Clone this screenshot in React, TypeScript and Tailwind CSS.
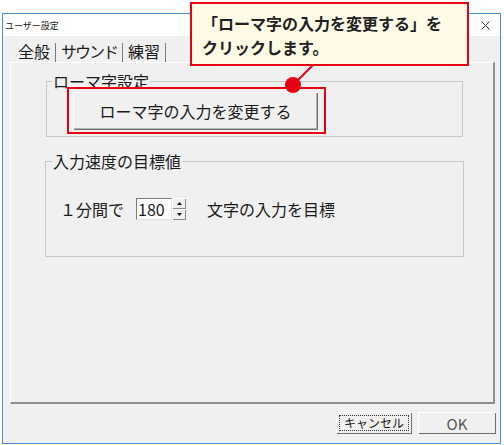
const red = "#e60012";

function Sep() {
  return <span className="mx-[5px] h-[19px] w-px self-end bg-[#7a7a7a]" />;
}

function SpinButton({ up }: { up?: boolean }) {
  return (
    <div className="flex h-[11px] w-[14px] items-center justify-center bg-[#f0f0f0] shadow-[inset_1px_1px_0_#fff,inset_-1px_-1px_0_#8a8a8a]">
      <svg width="5" height="3" viewBox="0 0 5 3">
        {up ? <path d="M2.5 0 L5 3 L0 3 Z" fill="#111" /> : <path d="M0 0 L5 0 L2.5 3 Z" fill="#111" />}
      </svg>
    </div>
  );
}

export default function App() {
  return (
    <div className="relative h-[445px] w-[504px] overflow-hidden bg-white font-['Noto_Sans_CJK_JP',sans-serif] text-[#1a1a1a]">
      <div className="pl-[2px] pt-[13px]">
        <div className="flex h-[431px] w-[499px] flex-col border border-[#4a8fd0] bg-[#f0f0f0]">
          {/* title bar */}
          <div className="flex h-[22px] items-center justify-between bg-white pl-[2px] pr-[10px]">
            <span className="text-[9px] leading-none">ユーザー設定</span>
            <svg width="9" height="9" viewBox="0 0 9 9">
              <path d="M0.5 0.5 L8.5 8.5 M8.5 0.5 L0.5 8.5" stroke="#333" strokeWidth="1" />
            </svg>
          </div>

          {/* tabs */}
          <div className="flex h-[26px] items-end pl-[15px] text-[16px] leading-[20px]">
            <span className="pb-[1px]">全般</span>
            <Sep />
            <span className="pb-[1px] tracking-[-2px]">サウンド</span>
            <Sep />
            <span className="pb-[1px]">練習</span>
            <Sep />
          </div>

          {/* tab page */}
          <div className="ml-[7px] h-[342px] w-[485px] border-t border-l border-t-white border-l-white border-r-2 border-b-2 border-r-[#8e8e8e] border-b-[#8e8e8e]">
            <fieldset className="ml-[35px] mt-[9px] w-[417px] border border-[#c8c8c8] pb-[2px]">
              <legend className="ml-[5px] px-[1px] text-[16px] leading-[18px]">ローマ字設定</legend>
              <div className="relative z-10 ml-[20px] -mt-[3px] h-[47px] w-[259px] border-2 border-[#e60012] bg-[#f0f0f0] pl-[4px] pt-[3px]">
                <button className="flex h-[38px] w-[245px] items-center justify-center bg-[#f0f0f0] text-[16px] shadow-[inset_1px_1px_0_#fff,inset_-1px_-1px_0_#6e6e6e,inset_-2px_-2px_0_#b4b4b4]">
                  ローマ字の入力を変更する
                </button>
              </div>
            </fieldset>

            <fieldset className="ml-[34px] mt-[15px] w-[419px] border border-[#c8c8c8] pb-[36px]">
              <legend className="ml-[6px] px-[1px] text-[16px] leading-[18px]">入力速度の目標値</legend>
              <div className="ml-[14px] mt-[28px] flex h-[22px] items-center text-[16px]">
                <span>１分間で</span>
                <div className="ml-[12px] flex h-[22px] w-[36px] items-center border-t border-l border-t-[#7a7a7a] border-l-[#7a7a7a] border-r border-b border-r-[#e3e3e3] border-b-[#e3e3e3] bg-white pl-[1px] leading-none">
                  180
                </div>
                <div className="flex flex-col">
                  <SpinButton up />
                  <SpinButton />
                </div>
                <span className="ml-[21px]">文字の入力を目標</span>
              </div>
            </fieldset>
          </div>

          {/* footer buttons */}
          <div className="mt-[8px] flex justify-end gap-[6px] pr-[4px]">
            <button className="flex h-[22px] w-[76px] items-center justify-center bg-[#f0f0f0] p-[3px] shadow-[inset_1px_1px_0_#fff,inset_-1px_-1px_0_#6e6e6e]">
              <span className="flex h-full w-full items-center justify-center border border-dotted border-[#333] text-[12px] leading-none">
                キャンセル
              </span>
            </button>
            <button className="flex h-[22px] w-[78px] items-center justify-center bg-[#f0f0f0] text-[15px] leading-none text-[#555] shadow-[inset_1px_1px_0_#fff,inset_-1px_-1px_0_#6e6e6e]">
              OK
            </button>
          </div>
        </div>
      </div>

      {/* callout */}
      <div className="absolute left-[190px] top-[2px] h-[64px] w-[279px] border-2 border-[#e60012] bg-[#fffbe6] pl-[10px] pt-[7px] text-[16px] font-bold leading-[24px] text-[#222]">
        <p>「ローマ字の入力を変更する」を</p>
        <p>クリックします。</p>
      </div>
      <svg className="absolute left-0 top-0" width="504" height="445">
        <line x1="293" y1="85" x2="313" y2="65" stroke={red} strokeWidth="2" />
      </svg>
      <div className="absolute left-[285px] top-[77px] z-20 h-[16px] w-[16px] rounded-full bg-[#e60012]" />
    </div>
  );
}
